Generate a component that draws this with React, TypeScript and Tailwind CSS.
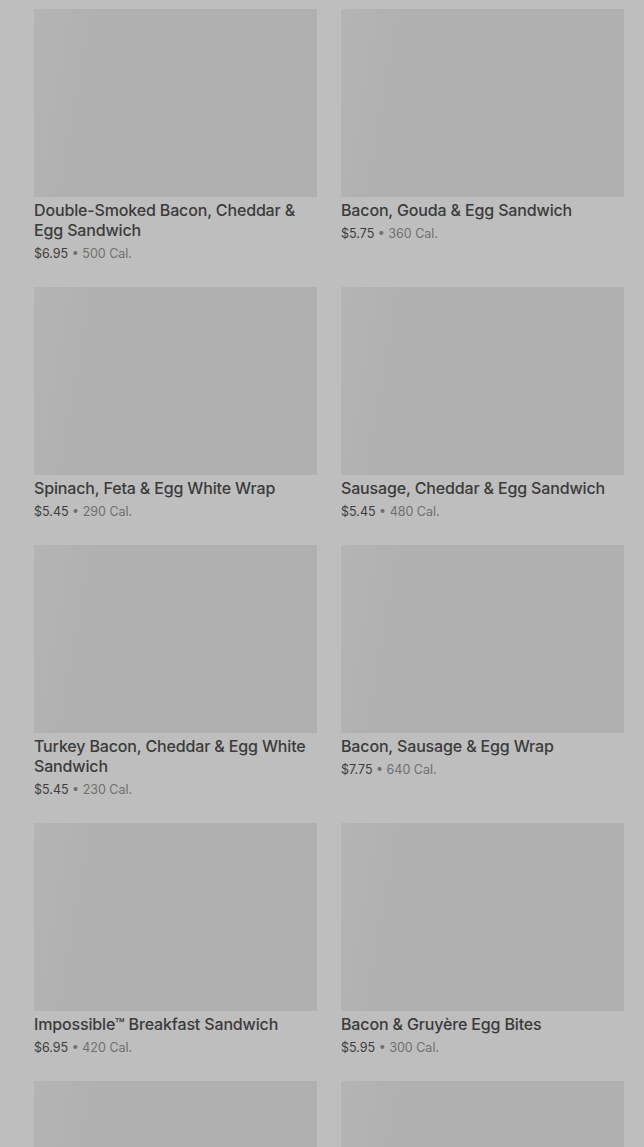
import React from 'react';

interface MenuItem {
  name: string;
  price: string;
  cal: string;
}

const items: MenuItem[] = [
  { name: 'Double-Smoked Bacon, Cheddar & Egg Sandwich', price: '$6.95', cal: '500 Cal.' },
  { name: 'Bacon, Gouda & Egg Sandwich', price: '$5.75', cal: '360 Cal.' },
  { name: 'Spinach, Feta & Egg White Wrap', price: '$5.45', cal: '290 Cal.' },
  { name: 'Sausage, Cheddar & Egg Sandwich', price: '$5.45', cal: '480 Cal.' },
  { name: 'Turkey Bacon, Cheddar & Egg White Sandwich', price: '$5.45', cal: '230 Cal.' },
  { name: 'Bacon, Sausage & Egg Wrap', price: '$7.75', cal: '640 Cal.' },
  { name: 'Impossible™ Breakfast Sandwich', price: '$6.95', cal: '420 Cal.' },
  { name: 'Bacon & Gruyère Egg Bites', price: '$5.95', cal: '300 Cal.' },
  { name: '', price: '', cal: '' },
  { name: '', price: '', cal: '' },
];

const ProductCard: React.FC<{ item: MenuItem }> = ({ item }) => (
  <div className="flex flex-col">
    {/* skeleton image */}
    <div className="h-[188px] w-full bg-[linear-gradient(100deg,#b4b4b4_0%,#b3b3b3_8%,#b0b0b0_22%,#b0b0b0_100%)]" />
    {item.name && (
      <div className="pt-[3px]">
        <h3 className="text-[16px] leading-5 font-medium tracking-[-0.15px] text-[#3b3b3b]">{item.name}</h3>
        <p className="mt-[5px] text-[12.5px] leading-[18px] text-[#3d3d3d]">
          {item.price}
          <span className="text-[#6f6f6f]"> • {item.cal}</span>
        </p>
      </div>
    )}
  </div>
);

export default function App() {
  return (
    <div className="min-h-screen overflow-hidden bg-[#bebebe] font-['Inter',_'Roboto',_sans-serif]">
      <div className="grid grid-cols-2 gap-x-6 gap-y-6 pl-[34px] pr-5 pt-[9px]">
        {items.map((item, i) => (
          <ProductCard key={i} item={item} />
        ))}
      </div>
    </div>
  );
}
